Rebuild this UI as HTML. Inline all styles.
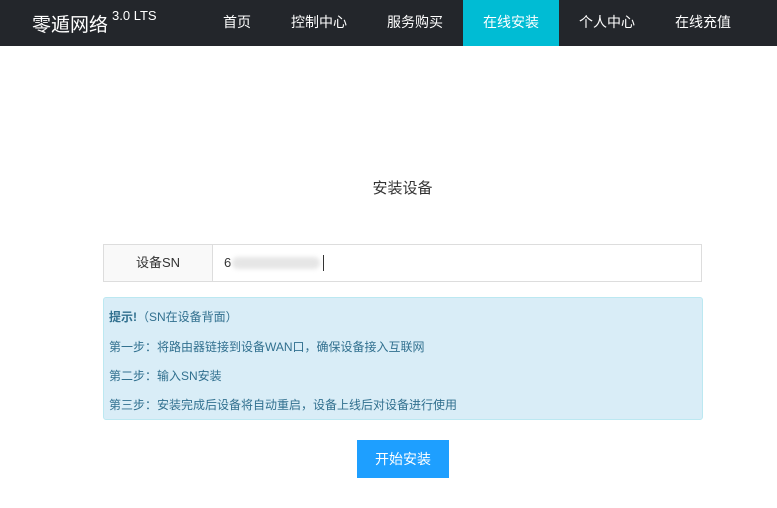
<!DOCTYPE html>
<html><head><meta charset="utf-8"><style>
*{margin:0;padding:0;box-sizing:border-box}
body{width:777px;height:508px;background:#fff;font-family:"Liberation Sans","Microsoft YaHei","Noto Sans CJK SC",sans-serif;position:relative;overflow:hidden}
.nav{position:absolute;left:0;top:0;width:777px;height:46px;background:#23262b}
.logo{position:absolute;left:32px;top:10px;color:#fff;font-size:19px}
.logo sup{font-size:13px;position:relative;top:-4px;margin-left:4px}
.it{position:absolute;top:0;height:46px;width:96px;line-height:44px;text-align:center;color:#fff;font-size:14px}
.act{background:#00bcd4}
.title{position:absolute;left:14px;width:777px;top:177px;text-align:center;font-size:15px;color:#333}
.row{position:absolute;left:103px;top:244px;width:599px;height:38px;border:1px solid #ddd}
.lab{position:absolute;left:0;top:0;width:109px;height:36px;background:#f9f9f9;border-right:1px solid #ddd;text-align:center;line-height:36px;font-size:13px;color:#333}
.val{position:absolute;left:120px;top:0;line-height:36px;font-size:13px;color:#333}
.blur{position:absolute;left:128px;top:12px;width:88px;height:12px;background:#e6e6e6;border-radius:6px;filter:blur(2px)}
.cur{position:absolute;left:219px;top:10px;width:1px;height:16px;background:#333}
.alert{position:absolute;left:103px;top:297px;width:600px;height:123px;background:#d9edf7;border:1px solid #bce8f1;border-radius:3px;color:#31708f;font-size:12px}
.alert div{position:absolute;left:5px}
.btn{position:absolute;left:357px;top:440px;width:92px;height:38px;background:#1e9fff;color:#fff;font-size:14px;text-align:center;line-height:38px}
</style></head><body>
<div class="nav">
<div class="logo">零遁网络<sup>3.0 LTS</sup></div>
<div class="it" style="left:189px">首页</div>
<div class="it" style="left:271px">控制中心</div>
<div class="it" style="left:367px">服务购买</div>
<div class="it act" style="left:463px">在线安装</div>
<div class="it" style="left:559px">个人中心</div>
<div class="it" style="left:655px">在线充值</div>
</div>
<div class="title">安装设备</div>
<div class="row"><div class="lab">设备SN</div><div class="val">6</div><div class="blur"></div><div class="cur"></div></div>
<div class="alert">
<div style="top:10px"><b>提示!</b>（SN在设备背面）</div>
<div style="top:40px">第一步：将路由器链接到设备WAN口，确保设备接入互联网</div>
<div style="top:69px">第二步：输入SN安装</div>
<div style="top:98px">第三步：安装完成后设备将自动重启，设备上线后对设备进行使用</div>
</div>
<div class="btn">开始安装</div>
</body></html>
